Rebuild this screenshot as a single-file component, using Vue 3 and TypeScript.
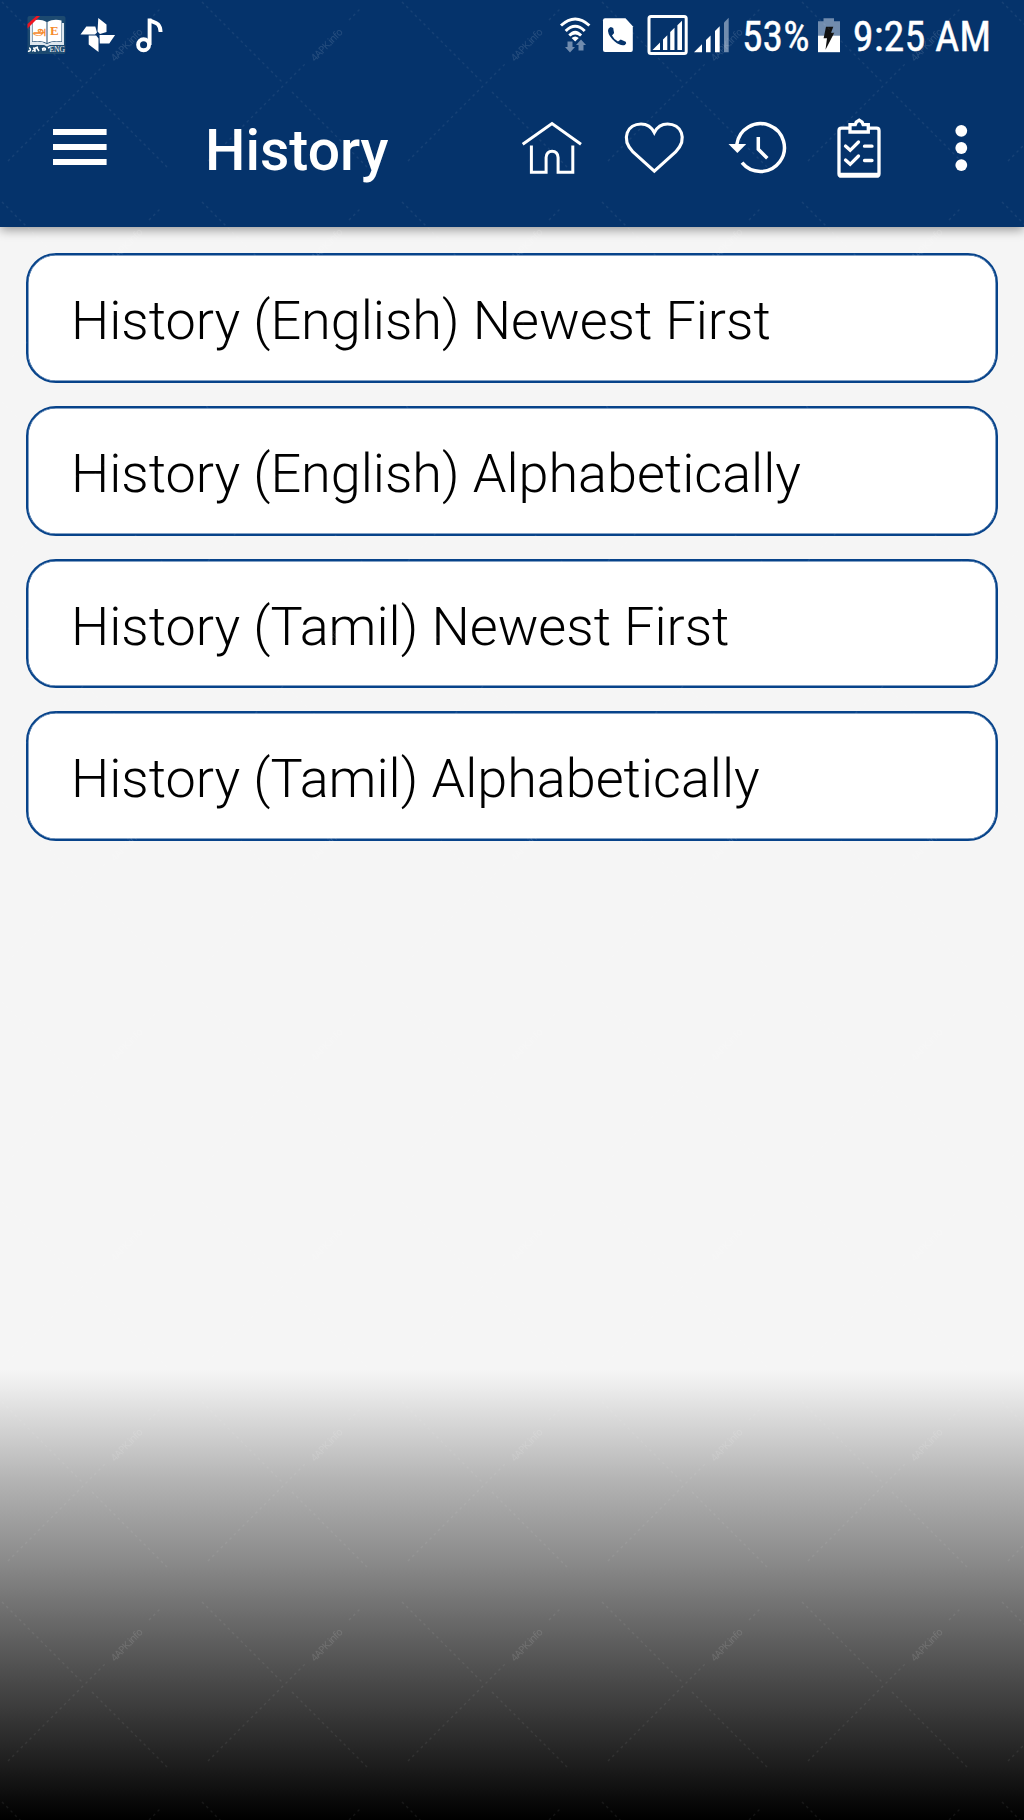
<script setup lang="ts">
const entries: string[] = [
  'History (English) Newest First',
  'History (English) Alphabetically',
  'History (Tamil) Newest First',
  'History (Tamil) Alphabetically',
]
</script>

<template>
  <div class="screen">
    <header class="header">
      <div class="status">
        <svg viewBox="0 0 72 72" width="72" height="72">
          <rect x="27.5" y="16" width="38" height="38" rx="2" fill="#1d4a70" />
          <path d="M30 23h2v19c5-1 10-1 15 2 5-3 10-3 15-2V23h2v22H50l-3 1.5-3-1.5H30z" fill="#dfe7ee" />
          <path d="M32.5 20.500c5-1.500 10-1 14 1.500v21c-4-2-9-2.500-14-1.500zM47.500 22c4-2.500 9-3 14-1.500v21c-5-1-10-.5-14 1.500z" fill="#fff" />
          <path d="M27.500 24l9-8h3.500L27.500 28.500z" fill="#f01520" />
          <text x="32.500" y="35" class="tamil" textLength="13" lengthAdjust="spacingAndGlyphs">அ</text>
          <text x="50" y="35" class="latin">E</text>
          <path d="M28 51c3 1 3-3 1-3m3 3c3 0 3-3 1-3m2 4v-4l3-1m-1 1 2 3m3-2c3-2 4 0 3 1h-3m6-2 2-1" fill="none" stroke="#fff" stroke-width="1.500" />
          <text x="49.500" y="51.500" class="eng" textLength="15.500" lengthAdjust="spacingAndGlyphs">ENG</text>
        </svg>
        <svg viewBox="72 0 54 72" width="54" height="72" fill="#fff">
          <path d="M98.300 18l8.200 6.500v7.500l-6.500 2-2.500-2.500zM80.500 34.600l5.800-8.200h9l1.700 6-2 2.200zM88.700 35.600h7.500l2.300 2.800v13.600l-9.800-7.500zM99.500 35h15.600l-5.800 8.400h-9.500z" />
        </svg>
        <svg viewBox="126 0 54 72" width="54" height="72" fill="none" stroke="#fff" stroke-width="3.900">
          <circle cx="143.600" cy="44.700" r="5.500" />
          <path d="M149.600 45V18.500M149.600 20c3.500 3 10.500 1 11 12" />
        </svg>
        <span class="spacer"></span>
        <svg viewBox="550 0 50 72" width="50" height="72">
          <path d="M561 25.500Q575.200 12.500 589.400 25.500M565.700 31Q575.200 21.500 584.700 31" fill="none" stroke="#fff" stroke-width="3" />
          <path d="M568.300 34.600q6.900-7.600 13.800 0l-2 2q-4.900-4.300-9.800 0zM571.600 38q3.600-3.200 7.200 0l-3.600 3.500z" fill="#fff" />
          <path d="M567.500 41.500h5v5.500h2.500l-5 5.500-5-5.500h2.500zM578.500 50.500h5V45h2.500l-5-5.500-5 5.500h2.500z" fill="#718cae" />
        </svg>
        <svg viewBox="600 0 40 72" width="40" height="72">
          <path d="M605 18.200h20.500l7.300 8V50q0 2-2 2H605q-2 0-2-2V20.200q0-2 2-2z" fill="#fff" />
          <path d="M610.800 27l2.400 1 .9 5-2.100 2.500q2 4 6 6l2.700-2 5 2.200.5 1.500-1.300 1.700q-4 1.600-10.200-3.400-6.200-5.500-6.700-10.500 0-3 2.800-4z" fill="#05336b" />
        </svg>
        <svg viewBox="640 0 52 72" width="52" height="72" fill="#fff">
          <rect x="649" y="16.500" width="37.200" height="37" rx="2" fill="none" stroke="#fff" stroke-width="3" />
          <path d="M652.500 50l7.500-7.500V50zM663 50V39.500l4.300-4.300V50zM670.200 50V32l4.300-4.300V50zM677.400 50V25.300l4.600-4.600V50z" />
        </svg>
        <svg viewBox="692 0 43 72" width="43" height="72" fill="#fff">
          <path d="M694 52.200l8-8v8zM706 52.200V40l4.600-4.600v16.800zM715 52.200V31l4.700-4.700v25.900z" />
          <path d="M724 52.200V22.500l4.700-4.700v34.400z" fill="#718cae" />
        </svg>
        <svg viewBox="735 0 77 72" width="77" height="72" fill="#fff">
          <text x="742" y="51.200" class="status-text" textLength="67.500" lengthAdjust="spacingAndGlyphs">53%</text>
        </svg>
        <svg viewBox="812 0 34 72" width="34" height="72">
          <path d="M818 21.300h5.500v-3h10.500v3h6v14.500h-22z" fill="#718cae" />
          <path d="M818 35.600h22v16.600h-22z" fill="#fff" />
          <path d="M826 26.700h7.300l-2.300 6h3.300l-8.800 17 1.500-11.500h-3.400z" fill="#111" />
        </svg>
        <svg viewBox="846 0 178 72" width="178" height="72" fill="#fff">
          <text x="852.800" y="51.200" class="status-text" textLength="138.500" lengthAdjust="spacingAndGlyphs">9:25 AM</text>
        </svg>
      </div>
      <div class="toolbar">
        <svg viewBox="0 72 205 155" width="205" height="155" fill="#fff">
          <path d="M53 129h53.600v6H53zM53 144h53.600v6H53zM53 159h53.600v6H53z" />
        </svg>
        <h1 class="title">History</h1>
        <svg viewBox="504 72 96 155" width="96" height="155" fill="none" stroke="#fff" stroke-width="3">
          <path d="M522.700 144.300L552 123.600l29 20.700" />
          <path d="M531.400 145.500v26.700h14.700v-14.700q.5-6.300 6-6.300t6 6.300v14.700h14.700v-26.700" />
        </svg>
        <svg viewBox="600 72 108 155" width="108" height="155" fill="none" stroke="#fff" stroke-width="3.100">
          <path d="M654.300 171.200L633 152C620 138 628 124 641 124c7 0 11 4 13.300 8.600C656.600 128 660.600 124 667.600 124c13 0 21 14 8 28z" />
        </svg>
        <svg viewBox="708 72 100 155" width="100" height="155" fill="none" stroke="#fff" stroke-width="3.500">
          <path d="M736.800 144.500A23.900 23.900 0 1 1 742 162.700M758.300 137v12.300l9 9" />
          <path d="M728.500 144h17.700l-8.800 9z" fill="#fff" stroke="none" />
        </svg>
        <svg viewBox="808 72 102 155" width="102" height="155" fill="none" stroke="#fff" stroke-width="3.300">
          <path d="M849 128.200h-7.500q-2.500 0-2.500 2.500v43q0 2.500 2.500 2.500h35q2.500 0 2.500-2.500v-43q0-2.500-2.500-2.500H869" />
          <path d="M839 174.300h40" />
          <path d="M850 132v-7.300h5.300l1-2.500 2.900-2 2.900 2 1 2.500h5.200v7.300z" />
          <path d="M845.500 146l4.700 4.300 8.300-8.300M864.500 146.200h7.500M845.500 160l4.700 4.300 8.300-8.300M864.500 160.500h7.500" stroke-linecap="round" />
        </svg>
        <svg viewBox="910 72 114 155" width="114" height="155" fill="#fff">
          <circle cx="961.300" cy="130.800" r="5.900" />
          <circle cx="961.300" cy="148" r="5.900" />
          <circle cx="961.300" cy="165.100" r="5.900" />
        </svg>
      </div>
    </header>
    <main class="list">
      <button v-for="entry in entries" :key="entry" class="entry" type="button">{{ entry }}</button>
    </main>
    <div class="fade"></div>
    <svg class="watermark" width="1024" height="1820">
      <defs>
        <pattern id="mark" width="200" height="200" patternUnits="userSpaceOnUse">
          <path d="M2 2l81 81M92 92l75 75M8 161l98-98M149 20l12-12" fill="none" stroke="#fff" stroke-opacity=".07" stroke-width="1.300" stroke-dasharray="2.500 3.600" />
          <text x="0" y="0" transform="translate(115 62) rotate(-46)" class="mark-text" textLength="41">4APK.info</text>
        </pattern>
      </defs>
      <rect width="1024" height="1820" fill="url(#mark)" />
    </svg>
  </div>
</template>

<style>
body {
  margin: 0;
}
</style>

<style scoped>
.screen {
  position: relative;
  display: flex;
  flex-direction: column;
  width: 1024px;
  height: 1820px;
  overflow: hidden;
  background: #f5f5f5;
  font-family: Roboto, "Liberation Sans", sans-serif;
}
svg {
  display: block;
  flex: none;
  overflow: visible;
}
.header {
  flex: none;
  height: 227px;
  background: #05336b;
  box-shadow: 0 3px 10px rgba(0, 0, 0, 0.38);
}
.status,
.toolbar {
  display: flex;
}
.spacer {
  flex: 1;
}
.status-text {
  font: 400 42.700px Roboto, sans-serif;
  font-stretch: 75%;
  stroke: #fff;
  stroke-width: 0.400px;
}
.tamil {
  font: 700 12px "Noto Sans", sans-serif;
  fill: #f58a2c;
}
.latin {
  font: 700 13px "Liberation Serif", serif;
  fill: #f58a2c;
}
.eng {
  font: 8px "Liberation Serif", serif;
  fill: #fff;
}
.title {
  flex: none;
  width: 299px;
  margin: 0;
  box-sizing: border-box;
  padding-top: 45px;
  color: #fff;
  font-size: 57px;
  font-weight: 500;
  line-height: 68px;
  white-space: nowrap;
}
.list {
  display: flex;
  flex: none;
  flex-direction: column;
  gap: 22.900px;
  padding: 26.300px 26px 0;
}
.entry {
  box-sizing: border-box;
  height: 129.800px;
  padding: 6px 43px 0;
  border: 2px solid #07438a;
  border-radius: 30px;
  box-shadow: inset 0 0 0 0.500px #07438a;
  background: #fff;
  color: #000;
  font: 300 54px/64px Roboto, sans-serif;
  letter-spacing: -0.020px;
  text-align: left;
  white-space: nowrap;
}
.fade {
  height: 450px;
  margin-top: auto;
  background: linear-gradient(#f5f5f5 0, #eee 14px, #d8d8d8 50px, #b2b2b2 113px, #878787 197px, #5f5f5f 270px, #3c3c3c 337px, #1c1c1c 397px, #060606 437px, #000 450px);
}
.watermark {
  position: absolute;
  inset: 0;
  pointer-events: none;
}
.mark-text {
  font: 10px "Open Sans", sans-serif;
  fill: #fff;
  fill-opacity: 0.13;
}
</style>
